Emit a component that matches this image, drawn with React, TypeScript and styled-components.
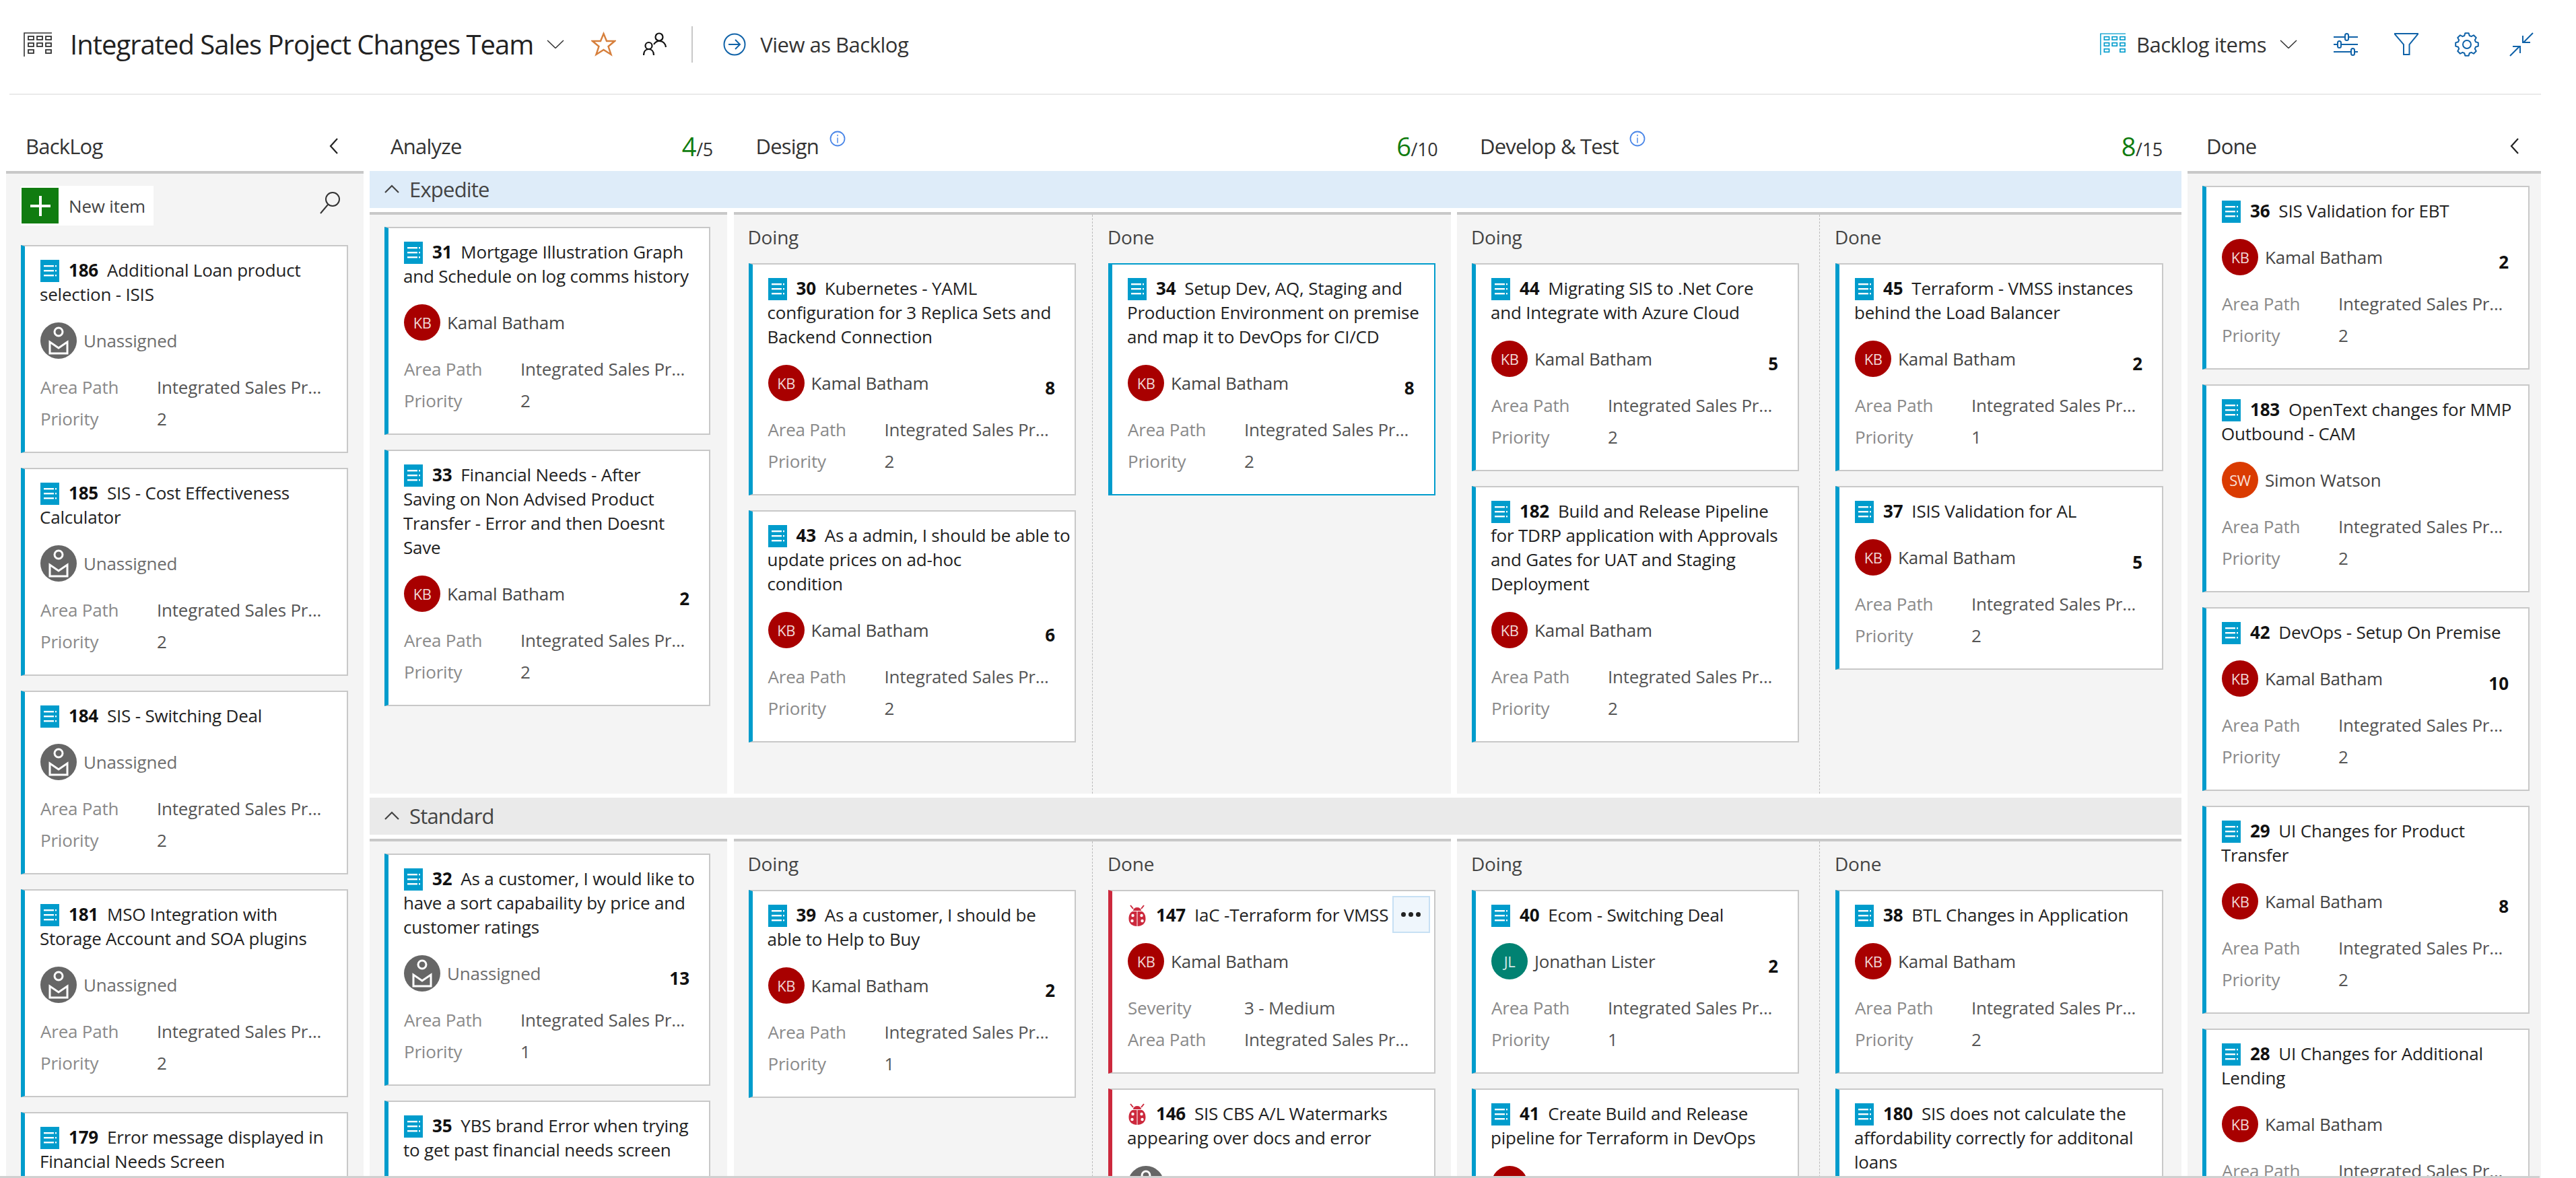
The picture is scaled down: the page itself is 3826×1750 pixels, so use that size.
import React from "react";
import styled, { createGlobalStyle } from "styled-components";

const Global = createGlobalStyle`
  html, body { margin: 0; padding: 0; background: #fff; }
  body { font-family: "Open Sans", "Noto Sans", "Liberation Sans", sans-serif; color: #333; }
`;

const BLUE = "#009ccc";
const RED = "#cc293d";
const GREY = "#c8c8c8";
const ICON = "#0f62a8";

const Page = styled.div`
  width: 3826px; height: 1750px; overflow: hidden; position: relative; display: flex; flex-direction: column; box-sizing: border-box;
`;
const TopBar = styled.header`
  height: 141px; box-sizing: border-box; margin: 0 52px 0 14px; border-bottom: 2px solid #eaeaea;
  display: flex; align-items: center; justify-content: space-between; padding: 0 11px 8px 21px;
`;
const Group = styled.div`display: flex; align-items: center;`;
const Title = styled.h1`font-size: 40px; font-weight: 400; margin: 0 20px 0 27px; color: #222; white-space: nowrap; letter-spacing: -1px;`;
const Sep = styled.div`width: 2px; height: 54px; background: #c8c8c8; margin: 0 45px 0 36px;`;
const LinkText = styled.span<{ $m: number }>`font-size: 31px; color: #333; margin-left: ${(p) => p.$m}px; white-space: nowrap; letter-spacing: -0.5px;`;
const Tool = styled.span`display: inline-flex; margin-left: ${(p: { $m: number }) => p.$m}px;`;

const Board = styled.div`display: flex; flex: 1; min-height: 0; padding-left: 9px; gap: 9px; overflow: hidden;`;
const Side = styled.section<{ $w: number }>`width: ${(p) => p.$w}px; flex: none; display: flex; flex-direction: column;`;
const Center = styled.section`width: 2691px; flex: none; display: flex; flex-direction: column;`;
const HeadRow = styled.div`display: grid; grid-template-columns: 531px 1065px 1076px; column-gap: 9.5px; height: 113px;`;
const ColHead = styled.div<{ $pl: number; $pr: number }>`
  height: 113px; display: flex; align-items: center; justify-content: space-between; box-sizing: border-box;
  padding: 38px ${(p) => p.$pr}px 0 ${(p) => p.$pl}px; font-size: 31px; color: #333;
`;
const HeadLabel = styled.span`display: inline-flex; align-items: flex-start; letter-spacing: -0.8px; white-space: nowrap;`;
const Info = styled.span`margin: -2px 0 0 16px; display: inline-flex;`;
const Count = styled.span`font-size: 27px; color: #333; letter-spacing: -0.3px; white-space: nowrap;`;
const CountBig = styled.span`font-size: 38px; color: #107c10;`;
const SideBody = styled.div<{ $pr: number }>`flex: 1; background: #f4f4f4; border-top: 4px solid ${GREY}; padding: 18px ${(p) => p.$pr}px 0 22px; overflow: hidden;`;
const Band = styled.div<{ $c: string }>`
  height: 55px; background: ${(p) => p.$c}; display: flex; align-items: center; padding: 0 0 2px 22px; gap: 15px;
  font-size: 31px; color: #444; flex: none; box-sizing: border-box; margin-bottom: 6px; letter-spacing: -0.8px;
`;
const Lane = styled.div<{ $h: number }>`
  display: grid; grid-template-columns: 531px 1065px 1076px; column-gap: 9.5px; height: ${(p) => p.$h}px; flex: none; margin-bottom: 6px;
`;
const Cell = styled.div`background: #f4f4f4; border-top: 4px solid ${GREY}; padding: 18px 25px 0 22px; overflow: hidden;`;
const SplitCell = styled.div`background: #f4f4f4; border-top: 4px solid ${GREY}; display: grid; grid-template-columns: minmax(0, 1fr) minmax(0, 1fr); overflow: hidden;`;
const Sub = styled.div<{ $dash?: boolean; $l: number; $r: number }>`
  min-width: 0; padding: 0 ${(p) => p.$r}px 0 ${(p) => p.$l}px; ${(p) => (p.$dash ? "border-left: 1px dashed #bbb;" : "")}
`;
const SubLabel = styled.div`height: 72px; line-height: 66px; margin-left: -1px; font-size: 28px; color: #444; letter-spacing: -0.2px;`;

const NewRow = styled.div`display: flex; align-items: center; justify-content: space-between; height: 59px; margin-bottom: 29px; padding-right: 11px;`;
const NewBtn = styled.div`display: flex; align-items: center; background: #fff; height: 59px; padding-right: 12px;`;
const Plus = styled.span`width: 55px; height: 53px; background: #107c10; display: flex; align-items: center; justify-content: center; margin-left: 1px;`;
const NewText = styled.span`font-size: 26px; color: #444; margin-left: 15px; letter-spacing: -0.2px;`;
const SearchSlot = styled.span`display: inline-flex; margin-bottom: 10px;`;

const CardBox = styled.article<{ $bug?: boolean; $sel?: boolean }>`
  position: relative; background: #fff; box-sizing: border-box; margin-bottom: 22px;
  border: 2px solid ${(p) => (p.$sel ? BLUE : GREY)};
  border-left: 6px solid ${(p) => (p.$bug ? RED : BLUE)};
  padding: 17px 18px 26px 22px;
`;
const CardTitle = styled.div`font-size: 26px; line-height: 36px; color: #222; white-space: pre; letter-spacing: -0.2px;`;
const IconSlot = styled.span`display: inline-block; width: 28px; height: 33px; vertical-align: -8px; margin: 0 14px 0 1px;`;
const Num = styled.b`font-weight: 700; color: #111; margin-right: 13px;`;
const Assign = styled.div`display: flex; align-items: center; height: 54px; margin: 24px 0 0 1px; position: relative;`;
const Avatar = styled.span<{ $c: string }>`
  width: 54px; height: 54px; border-radius: 50%; background: ${(p) => p.$c}; color: rgba(255, 255, 255, 0.85); font-size: 22px;
  display: flex; align-items: center; justify-content: center; flex: none; letter-spacing: -0.5px;
`;
const Person = styled.span<{ $none?: boolean }>`font-size: 26px; margin-left: 10px; color: ${(p) => (p.$none ? "#6e6e6e" : "#444")}; letter-spacing: -0.2px;`;
const Effort = styled.b`position: absolute; right: 11px; bottom: 2px; font-size: 26px; color: #111;`;
const Fields = styled.div`margin: 18px 0 0 1px; display: grid; grid-template-columns: 173px 1fr; grid-auto-rows: 47px; align-items: center; font-size: 26px; letter-spacing: -0.2px;`;
const Label = styled.span`color: #8a8a8a;`;
const Value = styled.span`color: #555; white-space: nowrap;`;
const More = styled.span`
  position: absolute; right: 6px; top: 7px; width: 56px; height: 55px; box-sizing: border-box; background: #eff6fc; border: 2px solid #c7e0f4;
  display: flex; align-items: center; justify-content: center; gap: 4px;
`;
const Dot = styled.i`width: 7px; height: 7px; background: #222; border-radius: 50%; display: block;`;
const BottomLine = styled.div`position: absolute; left: 0; right: 54px; bottom: 0; height: 3px; background: #d0d0d0;`;

const StoryIcon = () => (
  <svg width="28" height="33" viewBox="0 0 28 33"><rect width="28" height="33" fill="#009ccc" />
    <g fill="#fff"><rect x="5" y="8" width="15" height="2.4" /><rect x="22" y="8" width="2" height="2.4" /><rect x="5" y="15" width="15" height="2.4" /><rect x="22" y="15" width="2" height="2.4" /><rect x="5" y="22" width="15" height="2.4" /><rect x="22" y="22" width="2" height="2.4" /></g>
  </svg>
);
const BugIcon = () => (
  <svg width="28" height="33" viewBox="0 0 28 33">
    <path d="M4 1l4 5M24 1l-4 5" stroke="#cc293d" strokeWidth="2" fill="none" />
    <path d="M8 9a6 5 0 0 1 12 0z" fill="#cc293d" />
    <path d="M13.5 10H7C3 12 1.5 16 1.5 21 1.5 28 7 32 13.5 32zM14.5 10H21c4 2 5.500 6 5.500 11 0 7-5.500 11-12 11z" fill="#cc293d" />
    <g fill="#fff"><circle cx="7.5" cy="16" r="2.2" /><circle cx="20.5" cy="16" r="2.2" /><circle cx="6.5" cy="24" r="2.2" /><circle cx="21.5" cy="24" r="2.2" /></g>
  </svg>
);
const Unassigned = () => (
  <svg width="54" height="54" viewBox="0 0 54 54" style={{ flex: "none" }}>
    <circle cx="27" cy="27" r="27" fill="#666" />
    <circle cx="27" cy="14" r="6" fill="none" stroke="#fff" strokeWidth="3" />
    <path d="M14 29v17h26V29l-13 9z" fill="none" stroke="#fff" strokeWidth="3" />
  </svg>
);
const BoardIcon = ({ c, w = 42, h = 36 }: { c: string; w?: number; h?: number }) => (
  <svg width={w} height={h} viewBox="0 0 42 36" fill="none" stroke={c}>
    <path d="M1 36V1h41" strokeWidth="1.6" />
    <g strokeWidth="1.8">
      <rect x="7" y="6" width="8" height="5" /><rect x="20" y="6" width="8" height="5" /><rect x="33" y="6" width="8" height="5" />
      <rect x="7" y="16" width="8" height="5" /><rect x="20" y="16" width="8" height="5" /><rect x="33" y="16" width="8" height="5" />
      <rect x="7" y="26" width="8" height="5" /><rect x="33" y="26" width="8" height="5" />
    </g>
  </svg>
);
const Chevron = ({ w = 26, c = "#333" }: { w?: number; c?: string }) => (
  <svg width={w} height={w * 0.52} viewBox="0 0 25 13" fill="none" stroke={c} strokeWidth="1.5"><path d="M1 1l11.500 11L24 1" /></svg>
);
const Star = () => (
  <svg width="37" height="37" viewBox="0 0 37 37" fill="none" stroke="#d67f3c" strokeWidth="2.4"><path d="M18.500 3L23 14H35L25.500 22 29.500 34 18.500 27 7.500 34 11.500 22 2 14H14z" /></svg>
);
const People = () => (
  <svg width="36" height="36" viewBox="0 0 36 36" fill="none" stroke="#111" strokeWidth="2.2"><circle cx="8.500" cy="20" r="5" /><circle cx="24" cy="7" r="5.500" /><path d="M1 34c0-6 3.500-9 7.500-9s7.500 3 7.500 9" /><path d="M16 18c2-3 4.500-5 8-5 5 0 9 3 10 9" /></svg>
);
const ArrowCircle = () => (
  <svg width="34" height="34" viewBox="0 0 34 34" fill="none" stroke={ICON} strokeWidth="2"><circle cx="17" cy="17" r="15.500" /><path d="M8 17h17M18 10l7 7-7 7" /></svg>
);
const Sliders = () => (
  <svg width="36" height="34" viewBox="0 0 36 34" fill="none" stroke={ICON} strokeWidth="2"><path d="M0 6h36M0 17h36M0 28h36" /><rect x="17" y="1" width="5" height="10" rx="2.500" fill="#fff" /><rect x="6" y="12" width="5" height="10" rx="2.500" fill="#fff" /><rect x="26" y="23" width="5" height="10" rx="2.500" fill="#fff" /></svg>
);
const Funnel = () => (
  <svg width="36" height="33" viewBox="0 0 36 33" fill="none" stroke={ICON} strokeWidth="2"><path d="M1 1h34v1L22.500 17v15H14V17L1 2z" /></svg>
);
const gearPath = (() => {
  const pts: string[] = [];
  const pt = (r: number, deg: number) => {
    const a = ((deg - 90) * Math.PI) / 180;
    return `${(18 + r * Math.cos(a)).toFixed(2)} ${(18 + r * Math.sin(a)).toFixed(2)}`;
  };
  for (let i = 0; i < 8; i++) {
    const c = i * 45;
    pts.push(pt(13.5, c - 16), pt(17, c - 9), pt(17, c + 9), pt(13.5, c + 16));
  }
  return `M${pts.join("L")}z`;
})();
const Gear = () => (
  <svg width="36" height="36" viewBox="0 0 36 36" fill="none" stroke={ICON} strokeWidth="2" strokeLinejoin="round"><path d={gearPath} /><circle cx="18" cy="18" r="6" /></svg>
);
const Collapse = () => (
  <svg width="36" height="36" viewBox="0 0 36 36" fill="none" stroke={ICON} strokeWidth="2"><path d="M35 1L21 15M20 5v10h11M1 35l14-14M16 31V21H5" /></svg>
);
const InfoIcon = () => (
  <svg width="24" height="24" viewBox="0 0 24 24" fill="none" stroke="#4a86e8" strokeWidth="1.8"><circle cx="12" cy="12" r="10.500" /><path d="M12 10.500v8M12 6v2.200" strokeWidth="1.4" /></svg>
);
const Back = () => (
  <svg width="14" height="24" viewBox="0 0 14 24" fill="none" stroke="#222" strokeWidth="2.2"><path d="M12 1L2 12l10 11" /></svg>
);
const Up = ({ c = "#444" }: { c?: string }) => (
  <svg width="22" height="13" viewBox="0 0 22 13" fill="none" stroke={c} strokeWidth="2.2"><path d="M1 12L11 2l10 10" /></svg>
);
const Search = () => (
  <svg width="32" height="34" viewBox="0 0 32 34" fill="none" stroke="#333" strokeWidth="2"><circle cx="20" cy="12" r="10" /><path d="M13 20L2 33" /></svg>
);

type P = { n?: string; i?: string; c?: string };
const KB: P = { n: "Kamal Batham", i: "KB", c: "#a80000" };
const NONE: P = {};
const AREA = "Integrated Sales Pr...";

type C = { id: number; t: string; p: P; e?: number; pr?: number; bug?: boolean; sev?: string; sel?: boolean; more?: boolean };

const Card = ({ c }: { c: C }) => (
  <CardBox $bug={c.bug} $sel={c.sel}>
    {c.more && <More><Dot /><Dot /><Dot /></More>}
    <CardTitle>
      <IconSlot>{c.bug ? <BugIcon /> : <StoryIcon />}</IconSlot>
      <Num>{c.id}</Num>{c.t}
    </CardTitle>
    <Assign>
      {c.p.n ? <Avatar $c={c.p.c as string}>{c.p.i}</Avatar> : <Unassigned />}
      <Person $none={!c.p.n}>{c.p.n || "Unassigned"}</Person>
      {c.e !== undefined && <Effort>{c.e}</Effort>}
    </Assign>
    <Fields>
      {c.sev && <><Label>Severity</Label><Value>{c.sev}</Value></>}
      <Label>Area Path</Label><Value>{AREA}</Value>
      {c.pr !== undefined && <><Label>Priority</Label><Value>{c.pr}</Value></>}
    </Fields>
  </CardBox>
);

const backlog: C[] = [
  { id: 186, t: "Additional Loan product\nselection - ISIS", p: NONE, pr: 2 },
  { id: 185, t: "SIS - Cost Effectiveness\nCalculator", p: NONE, pr: 2 },
  { id: 184, t: "SIS - Switching Deal", p: NONE, pr: 2 },
  { id: 181, t: "MSO Integration with\nStorage Account and SOA plugins", p: NONE, pr: 2 },
  { id: 179, t: "Error message displayed in\nFinancial Needs Screen", p: NONE, pr: 2 },
];
const done: C[] = [
  { id: 36, t: "SIS Validation for EBT", p: KB, e: 2, pr: 2 },
  { id: 183, t: "OpenText changes for MMP\nOutbound - CAM", p: { n: "Simon Watson", i: "SW", c: "#da3b01" }, pr: 2 },
  { id: 42, t: "DevOps - Setup On Premise", p: KB, e: 10, pr: 2 },
  { id: 29, t: "UI Changes for Product\nTransfer", p: KB, e: 8, pr: 2 },
  { id: 28, t: "UI Changes for Additional\nLending", p: KB, pr: 2 },
];
const exp = {
  analyze: [
    { id: 31, t: "Mortgage Illustration Graph\nand Schedule on log comms history", p: KB, pr: 2 },
    { id: 33, t: "Financial Needs - After\nSaving on Non Advised Product\nTransfer - Error and then Doesnt\nSave", p: KB, e: 2, pr: 2 },
  ] as C[],
  dDoing: [
    { id: 30, t: "Kubernetes - YAML\nconfiguration for 3 Replica Sets and\nBackend Connection", p: KB, e: 8, pr: 2 },
    { id: 43, t: "As a admin, I should be able to\nupdate prices on ad-hoc\ncondition", p: KB, e: 6, pr: 2 },
  ] as C[],
  dDone: [{ id: 34, t: "Setup Dev, AQ, Staging and\nProduction Environment on premise\nand map it to DevOps for CI/CD", p: KB, e: 8, pr: 2, sel: true }] as C[],
  tDoing: [
    { id: 44, t: "Migrating SIS to .Net Core\nand Integrate with Azure Cloud", p: KB, e: 5, pr: 2 },
    { id: 182, t: "Build and Release Pipeline\nfor TDRP application with Approvals\nand Gates for UAT and Staging\nDeployment", p: KB, pr: 2 },
  ] as C[],
  tDone: [
    { id: 45, t: "Terraform - VMSS instances\nbehind the Load Balancer", p: KB, e: 2, pr: 1 },
    { id: 37, t: "ISIS Validation for AL", p: KB, e: 5, pr: 2 },
  ] as C[],
};
const std = {
  analyze: [
    { id: 32, t: "As a customer, I would like to\nhave a sort capabaility by price and\ncustomer ratings", p: NONE, e: 13, pr: 1 },
    { id: 35, t: "YBS brand Error when trying\nto get past financial needs screen", p: NONE, pr: 1 },
  ] as C[],
  dDoing: [{ id: 39, t: "As a customer, I should be\nable to Help to Buy", p: KB, e: 2, pr: 1 }] as C[],
  dDone: [
    { id: 147, t: "IaC -Terraform for VMSS", p: KB, bug: true, sev: "3 - Medium", more: true },
    { id: 146, t: "SIS CBS A/L Watermarks\nappearing over docs and error", p: NONE, bug: true, sev: "3 - Medium" },
  ] as C[],
  tDoing: [
    { id: 40, t: "Ecom - Switching Deal", p: { n: "Jonathan Lister", i: "JL", c: "#018272" }, e: 2, pr: 1 },
    { id: 41, t: "Create Build and Release\npipeline for Terraform in DevOps", p: KB, pr: 1 },
  ] as C[],
  tDone: [
    { id: 38, t: "BTL Changes in Application", p: KB, pr: 2 },
    { id: 180, t: "SIS does not calculate the\naffordability correctly for additonal\nloans", p: KB, pr: 2 },
  ] as C[],
};

const Split = ({ a, b, r1, r2 }: { a: C[]; b: C[]; r1: number; r2: number }) => (
  <SplitCell>
    <Sub $l={22} $r={r1}><SubLabel>Doing</SubLabel>{a.map((c) => <Card key={c.id} c={c} />)}</Sub>
    <Sub $dash $l={23} $r={r2}><SubLabel>Done</SubLabel>{b.map((c) => <Card key={c.id} c={c} />)}</Sub>
  </SplitCell>
);

export default function App() {
  return (
    <Page>
      <Global />
      <TopBar>
        <Group>
          <BoardIcon c="#333" />
          <Title>Integrated Sales Project Changes Team</Title>
          <Chevron />
          <Tool $m={40}><Star /></Tool>
          <Tool $m={40}><People /></Tool>
          <Sep />
          <ArrowCircle />
          <LinkText $m={21}>View as Backlog</LinkText>
        </Group>
        <Group>
          <BoardIcon c="#009ccc" w={38} h={33} />
          <LinkText $m={16}>Backlog items</LinkText>
          <Tool $m={20}><Chevron /></Tool>
          <Tool $m={54}><Sliders /></Tool>
          <Tool $m={54}><Funnel /></Tool>
          <Tool $m={54}><Gear /></Tool>
          <Tool $m={45}><Collapse /></Tool>
        </Group>
      </TopBar>
      <Board>
        <Side $w={531}>
          <ColHead $pl={29} $pr={37}><HeadLabel>BackLog</HeadLabel><Back /></ColHead>
          <SideBody $pr={23}>
            <NewRow>
              <NewBtn>
                <Plus><svg width="30" height="30" viewBox="0 0 30 30" fill="#fff"><rect x="13" width="4" height="30" /><rect y="13" width="30" height="4" /></svg></Plus>
                <NewText>New item</NewText>
              </NewBtn>
              <SearchSlot><Search /></SearchSlot>
            </NewRow>
            {backlog.map((c) => <Card key={c.id} c={c} />)}
          </SideBody>
        </Side>
        <Center>
          <HeadRow>
            <ColHead $pl={31} $pr={21}><HeadLabel>Analyze</HeadLabel><Count><CountBig>4</CountBig>/5</Count></ColHead>
            <ColHead $pl={33} $pr={19}><HeadLabel>Design<Info><InfoIcon /></Info></HeadLabel><Count><CountBig>6</CountBig>/10</Count></ColHead>
            <ColHead $pl={34} $pr={28}><HeadLabel>Develop &amp; Test<Info><InfoIcon /></Info></HeadLabel><Count><CountBig>8</CountBig>/15</Count></ColHead>
          </HeadRow>
          <Band $c="#deecf9"><Up />Expedite</Band>
          <Lane $h={864}>
            <Cell>{exp.analyze.map((c) => <Card key={c.id} c={c} />)}</Cell>
            <Split a={exp.dDoing} b={exp.dDone} r1={24} r2={23} />
            <Split a={exp.tDoing} b={exp.tDone} r1={30} r2={27} />
          </Lane>
          <Band $c="#eaeaea"><Up />Standard</Band>
          <Lane $h={600}>
            <Cell>{std.analyze.map((c) => <Card key={c.id} c={c} />)}</Cell>
            <Split a={std.dDoing} b={std.dDone} r1={24} r2={23} />
            <Split a={std.tDoing} b={std.tDone} r1={30} r2={27} />
          </Lane>
        </Center>
        <Side $w={525}>
          <ColHead $pl={28} $pr={32}><HeadLabel>Done</HeadLabel><Back /></ColHead>
          <SideBody $pr={17}>{done.map((c) => <Card key={c.id} c={c} />)}</SideBody>
        </Side>
      </Board>
      <BottomLine />
    </Page>
  );
}
